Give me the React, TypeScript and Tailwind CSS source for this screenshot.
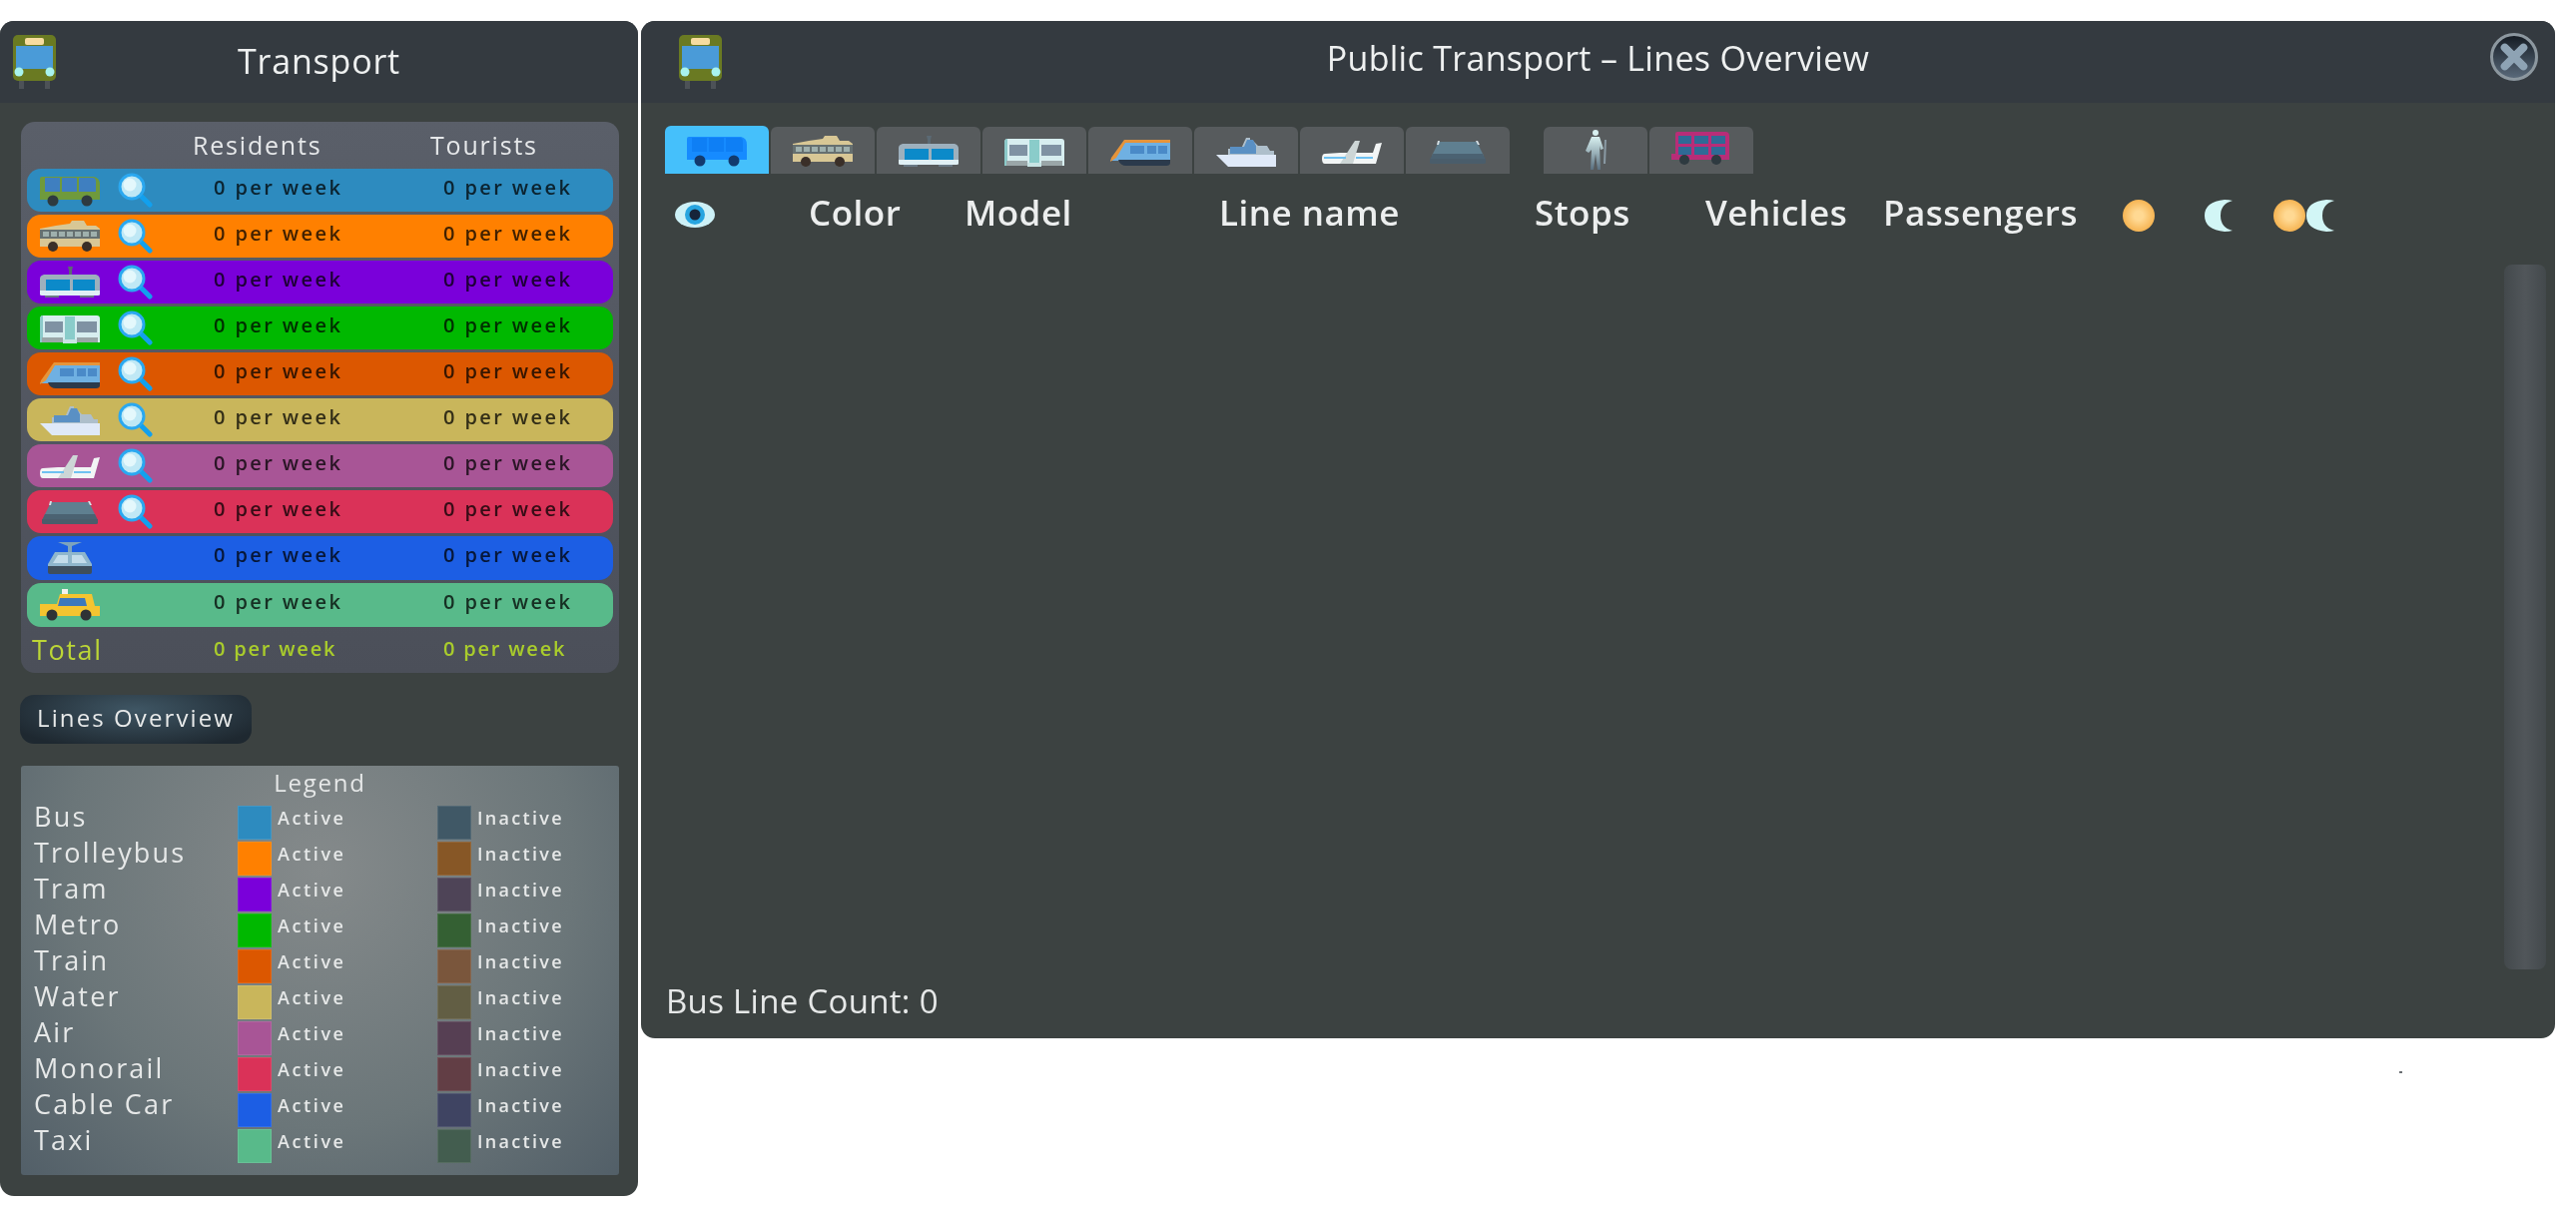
import React from 'react';

const Bus = ({ body = '#6f9a3c', glass = '#3f7fc0', wheel = '#2e3a40' }: { body?: string; glass?: string; wheel?: string }) => (
    <svg viewBox="0 0 60 32" className="w-[60px] h-[32px]">
        <path d="M2 2h52q6 1 6 8v15H0V4q0-2 2-2z" fill={body} />
        <path d="M5 3h15v14H5zM22 3h15v14H22zM39 3h14q3 0 3 4v10H39z" fill={glass} />
        <circle cx="13" cy="26" r="5.5" fill={wheel} />
        <circle cx="47" cy="26" r="5.5" fill={wheel} />
    </svg>
);

const Trolley = () => (
    <svg viewBox="0 0 60 32" className="w-[60px] h-[32px]">
        <path d="M16 5l14-2 2-3h12l3 5h9l4 3v4H0V8z" fill="#d8c795" />
        <path d="M0 9h60v10H0z" fill="#667070" />
        <path d="M3 11h6v5H3zM11 11h6v5h-6zM19 11h6v5h-6zM27 11h6v5h-6zM35 11h6v5h-6zM43 11h6v5h-6zM51 11h6v5h-6z" fill="#9fb0ad" />
        <path d="M0 18h60v8H0z" fill="#d8c795" />
        <circle cx="13" cy="26" r="5" fill="#3a2f28" />
        <circle cx="47" cy="26" r="5" fill="#3a2f28" />
    </svg>
);

const Tram = () => (
    <svg viewBox="0 0 60 32" className="w-[60px] h-[32px]">
        <path d="M28 0h5l-1 4v5h-3V4z" fill="#5b6a74" />
        <path d="M4 8h52q4 1 4 5v13H0V12q0-3 4-4z" fill="#9db0bd" />
        <path d="M6 13h24v11H6zM33 13h22v11H33z" fill="#0c8ac9" />
        <path d="M0 24h60v4q0 1-2 1H2q-2 0-2-1z" fill="#e0f0f5" />
        <path d="M5 29h14v2H5zM40 29h14v2H40z" fill="#6a7a86" />
    </svg>
);

const Metro = () => (
    <svg viewBox="0 0 60 32" className="w-[60px] h-[32px]">
        <path d="M3 3h54q3 0 3 3v24H0V7q0-4 3-4z" fill="#d7eef0" />
        <path d="M0 7q0-4 3-4v27H0z" fill="#8ccaca" />
        <path d="M5 9h18v11H5zM37 9h20v11H37z" fill="#7f92a3" />
        <path d="M25 4h10v24H25z" fill="#8accca" />
        <path d="M2 25h21v5H2zM37 25h21v5H37z" fill="#9aa6a8" />
        <path d="M23 27h14v4H23z" fill="#c7e4e4" />
    </svg>
);

const Train = () => (
    <svg viewBox="0 0 60 32" className="w-[60px] h-[32px]">
        <path d="M14 5h46v20H8L0 25z" fill="#6fb0e2" />
        <path d="M14 4h46v3H15L6 22l-6 4 1-4z" fill="#e6943a" />
        <path d="M20 10h14v8H20zM37 10h9v8h-9zM48 10h9v8h-9z" fill="#4a8ac8" />
        <path d="M8 24h52v3q0 3-4 3H16q-6 0-8-6z" fill="#2b3a4c" />
    </svg>
);

const Ship = () => (
    <svg viewBox="0 0 60 32" className="w-[60px] h-[32px]">
        <path d="M30 2h4v3h3l5 5h9l3 5h4v7H12v-9h13z" fill="#aebfcb" />
        <path d="M14 11h14l3-7h6l3 6v8H14z" fill="#5a90c4" />
        <path d="M0 19h60v12H12z" fill="#dfe9f8" />
    </svg>
);

const Plane = () => (
    <svg viewBox="0 0 60 32" className="w-[60px] h-[32px]">
        <path d="M3 18l15-1h33l3-9 6-1-6 21H3q-3 0-3-5t3-5z" fill="#f2f5f5" />
        <path d="M18 28L33 5h5l-7 23z" fill="#cdd6d6" />
        <path d="M2 21h22v2H2zM34 21h17v2H34z" fill="#6fc1f0" />
    </svg>
);

const Monorail = () => (
    <svg viewBox="0 0 60 32" className="w-[60px] h-[32px]">
        <path d="M11 6h38l7 14H4z" fill="#5f7f90" />
        <path d="M5 18h50l3 6H2z" fill="#4b6272" />
        <path d="M2 23h56v4q0 1-2 1H4q-2 0-2-1z" fill="#4a5d6b" />
        <path d="M10 5h2l-1 4h-2zM48 5h2l2 4h-2z" fill="#d5dfe4" />
    </svg>
);

const CableCar = () => (
    <svg viewBox="0 0 60 32" className="w-[60px] h-[32px]">
        <path d="M18 0h24l-10 4v8h-4V4z" fill="#7da3bd" />
        <path d="M15 10h30l7 12v3H8v-3z" fill="#8fb6cc" />
        <path d="M18 13h10v8H13zM32 13h10l5 8H32z" fill="#c3dcea" />
        <path d="M8 24h44v6q0 2-2 2H10q-2 0-2-2z" fill="#3e4e5c" />
    </svg>
);

const Taxi = () => (
    <svg viewBox="0 0 60 32" className="w-[60px] h-[32px]">
        <path d="M22 0h6v5h-6z" fill="#f2f2ee" />
        <path d="M20 5h32l3 12h5v10H0V15h17z" fill="#f4c430" />
        <path d="M20 9h25l2 8H18z" fill="#3c78bc" />
        <circle cx="12" cy="26" r="5.5" fill="#2f3235" />
        <circle cx="46" cy="26" r="5.5" fill="#2f3235" />
    </svg>
);

const Walker = () => (
    <svg viewBox="0 0 26 40" className="w-[26px] h-[40px]">
        <defs>
            <linearGradient id="walk" x1="0" y1="0" x2="0" y2="1">
                <stop offset="0" stopColor="#d8f0f0" />
                <stop offset="1" stopColor="#5a7080" />
            </linearGradient>
        </defs>
        <circle cx="13" cy="3" r="3" fill="#d8f0f0" />
        <path d="M9 7h8l4 12-3 1-1-4 1 24h-3l-2-16-2 16H8l1-20-3 3-3-2z" fill="url(#walk)" />
        <path d="M22 10h2l-1 24h-2z" fill="#8a9aa4" />
    </svg>
);

const DoubleDecker = () => (
    <svg viewBox="0 0 60 34" className="w-[60px] h-[34px]">
        <path d="M6 0h48q4 0 4 4v24H0V22h4V2q0-2 2-2z" fill="#b82d78" />
        <path d="M7 4h13v8H7zM23 4h14v8H23zM40 4h14v8H40zM7 15h13v8H7zM23 15h14v8H23zM40 15h14v8H40z" fill="#2f6a96" />
        <circle cx="13" cy="28" r="5" fill="#2e3a40" />
        <circle cx="45" cy="28" r="5" fill="#2e3a40" />
    </svg>
);

const Magnifier = () => (
    <svg viewBox="0 0 35 35" className="w-[35px] h-[35px]">
        <path d="M22 22l10 10" stroke="#12a0ee" strokeWidth="5" strokeLinecap="round" />
        <circle cx="14" cy="14" r="12" fill="#bfe8f5" stroke="#2aa8f0" strokeWidth="3" />
        <circle cx="12" cy="12" r="6.5" fill="#e4f8fc" />
    </svg>
);

const WindowIcon = () => (
    <svg viewBox="0 0 43 54" className="w-[43px] h-[54px]">
        <path d="M6 44h5v10H6zM32 44h5v10h-5z" fill="#4d5257" />
        <rect width="43" height="46" rx="5" fill="#6a7a22" />
        <rect x="12" y="3" width="19" height="7" rx="2" fill="#f7dca0" />
        <rect x="3" y="11" width="37" height="23" fill="#4a9bd8" />
        <circle cx="6" cy="37" r="4.5" fill="#a8f3ef" />
        <circle cx="37" cy="37" r="4.5" fill="#a8f3ef" />
    </svg>
);

const Eye = () => (
    <svg viewBox="0 0 40 26" className="w-[40px] h-[26px] -mt-[3px] ml-[2px]">
        <ellipse cx="20" cy="13" rx="20" ry="13" fill="#cdf1f7" />
        <circle cx="20" cy="13" r="10" fill="#27a5e0" />
        <circle cx="20" cy="13" r="5.5" fill="#16253a" />
    </svg>
);

const Sun = () => <div className="w-[32px] h-[32px] rounded-full bg-[radial-gradient(circle,#ffd993_20%,#f2a63a_90%)]" />;

const Moon = () => (
    <svg viewBox="0 0 30 32" className="w-[30px] h-[32px]">
        <path d="M20 0Q0 2 0 16t20 16q4 0 8-1-12-3-12-15T28 1q-4-1-8-1z" fill="#d2f6f6" />
    </svg>
);

const CloseButton = () => (
    <div className="w-[48px] h-[48px] rounded-full border-[3px] border-[#8c979f] bg-[linear-gradient(#151c24,#59697a)] flex items-center justify-center">
        <svg viewBox="0 0 24 24" className="w-[32px] h-[32px]">
            <path d="M5 5l14 14M19 5L5 19" stroke="#8ea3b4" strokeWidth="6" strokeLinecap="round" />
        </svg>
    </div>
);

interface Mode {
    name: string;
    active: string;
    inactive: string;
    icon: React.ReactNode;
    search: boolean;
    rowHeight: string;
}

const modes: Mode[] = [
    { name: 'Bus', active: 'bg-[#2d8bbf]', inactive: 'bg-[#405866]', icon: <Bus />, search: true, rowHeight: 'h-[43px]' },
    { name: 'Trolleybus', active: 'bg-[#ff8000]', inactive: 'bg-[#875726]', icon: <Trolley />, search: true, rowHeight: 'h-[43px]' },
    { name: 'Tram', active: 'bg-[#7a00da]', inactive: 'bg-[#4e4457]', icon: <Tram />, search: true, rowHeight: 'h-[43px]' },
    { name: 'Metro', active: 'bg-[#00b800]', inactive: 'bg-[#346033]', icon: <Metro />, search: true, rowHeight: 'h-[43px]' },
    { name: 'Train', active: 'bg-[#dc5700]', inactive: 'bg-[#7a563c]', icon: <Train />, search: true, rowHeight: 'h-[43px]' },
    { name: 'Water', active: 'bg-[#c9b65b]', inactive: 'bg-[#625e44]', icon: <Ship />, search: true, rowHeight: 'h-[43px]' },
    { name: 'Air', active: 'bg-[#a85596]', inactive: 'bg-[#563f53]', icon: <Plane />, search: true, rowHeight: 'h-[43px]' },
    { name: 'Monorail', active: 'bg-[#da3258]', inactive: 'bg-[#623e45]', icon: <Monorail />, search: true, rowHeight: 'h-[43px]' },
    { name: 'Cable Car', active: 'bg-[#1c5ee4]', inactive: 'bg-[#3f4462]', icon: <CableCar />, search: false, rowHeight: 'h-[44px]' },
    { name: 'Taxi', active: 'bg-[#58ba8a]', inactive: 'bg-[#435d4f]', icon: <Taxi />, search: false, rowHeight: 'h-[44px]' },
];

const TitleBar = ({ title, titleClass, iconClass, close }: { title: string; titleClass: string; iconClass: string; close?: boolean }) => (
    <div className="relative h-[82px] shrink-0 bg-[#343a40] flex items-center justify-center">
        <div className={`absolute top-[14px] ${iconClass}`}>
            <WindowIcon />
        </div>
        <span className={`leading-none font-medium text-[#eef0f0] ${titleClass}`}>{title}</span>
        {close && (
            <div className="absolute right-[17px] top-[12px]">
                <CloseButton />
            </div>
        )}
    </div>
);

const UsageRow = ({ mode }: { mode: Mode }) => (
    <div className={`${mode.active} ${mode.rowHeight} rounded-[14px] grid grid-cols-[187px_230px_1fr] items-center`}>
        <div className="flex items-center pl-[13px]">
            <div className="w-[60px] flex justify-center">{mode.icon}</div>
            {mode.search && (
                <div className="ml-[18px]">
                    <Magnifier />
                </div>
            )}
        </div>
        <span className="text-[20px] leading-none font-semibold tracking-[2.4px] text-black/75 -mt-[6px]">0 per week</span>
        <span className="text-[20px] leading-none font-semibold tracking-[2.4px] text-black/75 -mt-[6px]">0 per week</span>
    </div>
);

const LegendRow = ({ mode }: { mode: Mode }) => (
    <div className="h-[36px] grid grid-cols-[204px_200px_1fr] items-center text-[#e6e8e8]">
        <span className="text-[27px] leading-none font-medium tracking-[2.2px] -mt-[13px]">{mode.name}</span>
        <div className="flex items-center gap-[6px]">
            <div className={`w-[34px] h-[34px] border border-white/10 ${mode.active}`} />
            <span className="text-[18px] leading-none font-semibold tracking-[2.6px] -mt-[10px]">Active</span>
        </div>
        <div className="flex items-center gap-[6px]">
            <div className={`w-[34px] h-[34px] border border-white/10 ${mode.inactive}`} />
            <span className="text-[18px] leading-none font-semibold tracking-[2.3px] -mt-[10px]">Inactive</span>
        </div>
    </div>
);

const TransportPanel = () => (
    <div className="w-[639px] h-[1177px] shrink-0 rounded-[14px] overflow-hidden bg-[#3c4241] flex flex-col">
        <TitleBar title="Transport" titleClass="text-[34px] tracking-[0.8px] -mt-[2px]" iconClass="left-[13px]" />
        <div className="ml-[21px] mr-[19px] mt-[19px] h-[552px] rounded-[14px] bg-[linear-gradient(#5a5f69,#4b4f59)] flex flex-col">
            <div className="h-[47px] shrink-0 grid grid-cols-[172px_238px_1fr] items-center text-[25px] leading-none font-medium tracking-[1.8px] text-[#e6e8ea]">
                <span />
                <span>Residents</span>
                <span>Tourists</span>
            </div>
            <div className="px-[6px] flex flex-col gap-[3px]">
                {modes.map((mode) => (
                    <UsageRow key={mode.name} mode={mode} />
                ))}
            </div>
            <div className="flex-1 grid grid-cols-[193px_230px_1fr] items-center text-[#a9cc2c]">
                <span className="pl-[11px] text-[27px] leading-none font-medium tracking-[1.6px] text-[#bcd636] -mt-[2px]">Total</span>
                <span className="text-[20px] leading-none font-semibold tracking-[1.8px] -mt-[2px]">0 per week</span>
                <span className="text-[20px] leading-none font-semibold tracking-[1.8px] -mt-[2px]">0 per week</span>
            </div>
        </div>
        <div className="ml-[20px] mt-[22px] w-[232px] h-[49px] rounded-[14px] bg-[radial-gradient(ellipse_at_50%_30%,#3f5664,#1e2830_85%)] flex items-center justify-center">
            <span className="text-[24px] leading-none font-medium tracking-[2.1px] text-[#e8eaea] -mt-[3px]">Lines Overview</span>
        </div>
        <div className="ml-[21px] mr-[19px] mt-[22px] h-[410px] rounded-[3px] bg-[radial-gradient(ellipse_at_50%_25%,#858a8b,#6b7679_60%,#525f68)] px-[13px] flex flex-col">
            <div className="h-[39px] shrink-0 flex items-center justify-center text-[24px] leading-none font-medium tracking-[1.8px] text-[#e6e8e8] -mt-[3px] mb-[3px]">Legend</div>
            {modes.map((mode) => (
                <LegendRow key={mode.name} mode={mode} />
            ))}
        </div>
    </div>
);

const tabIcons: React.ReactNode[] = [
    <Bus body="#168bff" glass="#0e7ff5" wheel="#123a6e" />,
    <Trolley />,
    <Tram />,
    <Metro />,
    <Train />,
    <Ship />,
    <Plane />,
    <Monorail />,
];

const LinesPanel = () => (
    <div className="w-[1917px] h-[1019px] shrink-0 rounded-[14px] overflow-hidden bg-[#3c4241] flex flex-col">
        <TitleBar
            title="Public Transport – Lines Overview"
            titleClass="text-[34px] tracking-[0.3px] -mt-[8px]"
            iconClass="left-[38px]"
            close
        />
        <div className="flex items-end mt-[22px] pl-[24px] gap-[2px] h-[49px] shrink-0">
            {tabIcons.map((icon, i) => (
                <div
                    key={i}
                    className={`w-[104px] rounded-t-[6px] flex justify-center pt-[9px] ${i === 0 ? 'h-[48px] bg-[#45c0fb]' : 'h-[47px] bg-[#575b5d]'}`}
                >
                    {icon}
                </div>
            ))}
            <div className="w-[30px]" />
            <div className="w-[104px] h-[47px] rounded-t-[6px] bg-[#575b5d] flex justify-center pt-[3px]">
                <Walker />
            </div>
            <div className="w-[104px] h-[47px] rounded-t-[6px] bg-[#575b5d] flex justify-center pt-[5px]">
                <DoubleDecker />
            </div>
        </div>
        <div className="mt-[26px] pl-[32px] h-[32px] shrink-0 grid grid-cols-[136px_156px_255px_316px_171px_178px_240px_82px_69px_1fr] items-center text-[35px] leading-none font-semibold tracking-[0.5px] text-[#eceeee]">
            <Eye />
            <span className="-mt-[7px]">Color</span>
            <span className="-mt-[7px]">Model</span>
            <span className="-mt-[7px]">Line name</span>
            <span className="-mt-[7px]">Stops</span>
            <span className="-mt-[7px]">Vehicles</span>
            <span className="-mt-[7px]">Passengers</span>
            <Sun />
            <Moon />
            <div className="flex gap-[1px]">
                <Sun />
                <Moon />
            </div>
        </div>
        <div className="flex-1 flex justify-end pr-[9px] pt-[33px]">
            <div className="w-[42px] h-[706px] rounded-[8px] bg-[linear-gradient(90deg,#43494c,#51565a_50%,#43494c)]" />
        </div>
        <div className="h-[69px] shrink-0 pl-[25px] pt-[15px] text-[33px] leading-none font-medium tracking-[0.3px] text-[#e6e8e8]">Bus Line Count: 0</div>
    </div>
);

export default function App() {
    return (
        <div className="relative w-[2580px] h-[1217px] overflow-hidden bg-white pt-[21px] flex items-start gap-[3px] font-['Open_Sans',sans-serif] blur-[0.6px]">
            <TransportPanel />
            <LinesPanel />
            <div className="absolute left-[2403px] top-[1073px] w-[3px] h-[2px] bg-[#6b6f73]" />
        </div>
    );
}
